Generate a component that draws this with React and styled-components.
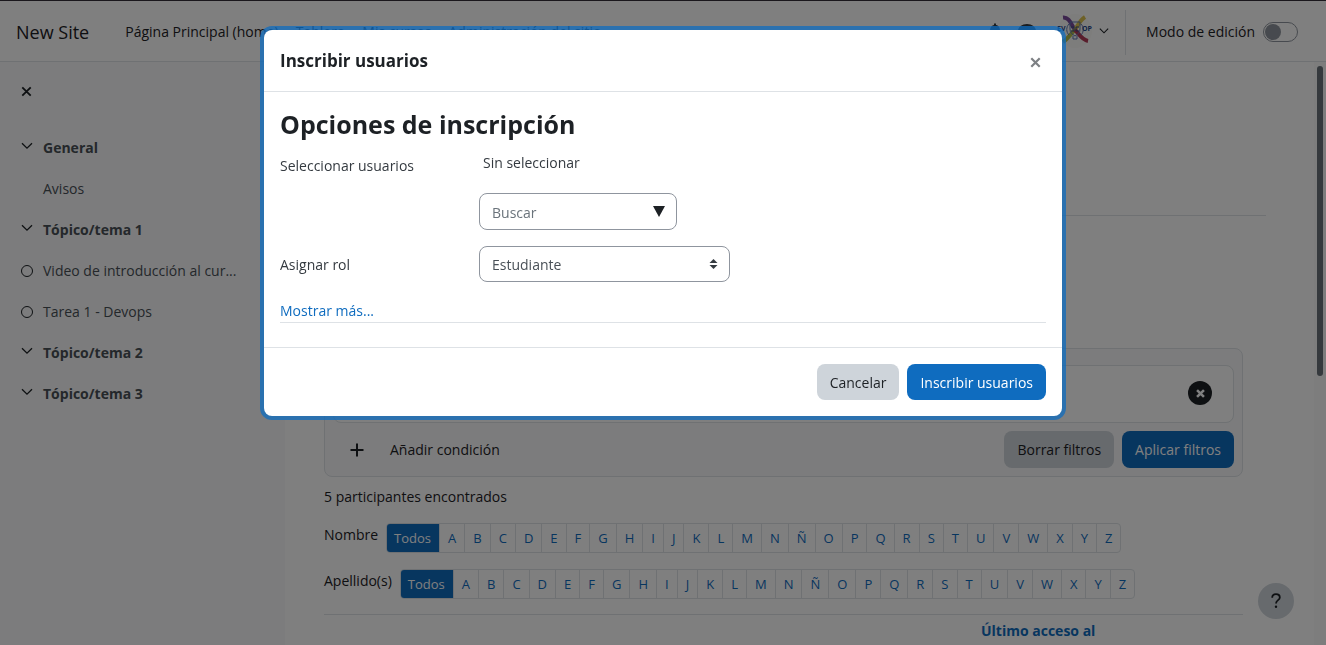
import React from "react";
import styled, { createGlobalStyle, css } from "styled-components";

const GlobalStyle = createGlobalStyle`
  *, *::before, *::after { box-sizing: border-box; }
  html, body { margin: 0; background: #fff; }
  body {
    font-family: "Open Sans", "Noto Sans", sans-serif;
    font-size: 14px;
    line-height: 22px;
    color: #1d2125;
    overflow: hidden;
  }
  button, input, select { font: inherit; color: inherit; margin: 0; }
  h1, h2, p, ul { margin: 0; padding: 0; }
  ul { list-style: none; }
  a { color: inherit; text-decoration: none; }
`;

const Page = styled.div`
  display: flex;
  flex-direction: column;
  height: 100vh;
  border-top: 1px solid #1a171c;
`;

const TopBar = styled.header`
  flex: none;
  display: flex;
  align-items: center;
  height: 61px;
  padding: 2px 28px 0 16px;
  border-bottom: 1px solid #dee2e6;
`;

const Brand = styled.a`
  margin-right: 36px;
  font-size: 18px;
`;

const Nav = styled.nav`
  display: flex;
  flex: 1;
  gap: 17px;
  white-space: nowrap;
`;

const IconButton = styled.button`
  display: inline-flex;
  align-items: center;
  justify-content: center;
  width: 32px;
  height: 32px;
  padding: 0;
  border: 0;
  background: none;
`;

const UserButton = styled(IconButton)`
  width: 52px;
  height: 36px;
  margin: 0 16px 0 14px;
  padding-bottom: 2px;
  gap: 6px;
`;

const EditMode = styled.label`
  display: flex;
  align-items: center;
  gap: 8px;
  height: 45px;
  padding-left: 20px;
  border-left: 1px solid #dee2e6;
`;

const Switch = styled.input`
  appearance: none;
  display: flex;
  align-items: center;
  width: 35px;
  height: 20px;
  margin: 0;
  padding: 0 1px;
  border: 1px solid #8f959e;
  border-radius: 10px;
  background: #fff;
  &::before {
    content: "";
    width: 16px;
    height: 16px;
    border-radius: 8px;
    background: #8f959e;
  }
`;

const Columns = styled.div`
  flex: 1;
  display: flex;
  min-height: 0;
`;

const Drawer = styled.aside`
  flex: none;
  width: 285px;
  padding: 13px 10px 0;
  background: #f8f9fa;
  color: #495057;
`;

const CourseIndex = styled.ul`
  margin-top: 20px;
`;

const IndexItem = styled.li`
  display: flex;
  align-items: center;
  height: 41px;
  font-weight: ${(p) => (p.$section ? 700 : 400)};
`;

const IndexMark = styled.span`
  flex: none;
  display: flex;
  justify-content: center;
  width: 33px;
  padding-bottom: ${(p) => (p.$section ? 3 : 0)}px;
`;

const Ring = styled.span`
  width: 12px;
  height: 12px;
  border: 1px solid #1d2125;
  border-radius: 50%;
`;

const Main = styled.main`
  flex: 1;
  min-width: 0;
  overflow: hidden;
  padding: 0 48px 0 16px;
`;

const CourseHeader = styled.div`
  height: 154px;
  border-bottom: 1px solid #dee2e6;
`;

const Participants = styled.section`
  padding: 132px 23px 0;
`;

const FilterCard = styled.div`
  display: flex;
  flex-direction: column;
  gap: 8px;
  padding: 16px 8px 8px;
  border: 1px solid #dee2e6;
  border-radius: 8px;
  background: #f8f9fa;
`;

const FilterRow = styled.div`
  display: flex;
  align-items: center;
  justify-content: flex-end;
  height: 58px;
  padding: 0 21px 2px;
  border: 1px solid #dee2e6;
  border-radius: 8px;
  background: #fff;
`;

const RemoveFilter = styled.button`
  display: flex;
  align-items: center;
  justify-content: center;
  width: 24px;
  height: 24px;
  padding: 0;
  border: 0;
  border-radius: 50%;
  background: #1d2125;
  color: #fff;
`;

const FilterActions = styled.div`
  display: flex;
  align-items: center;
  gap: 8px;
`;

const AddCondition = styled.button`
  display: flex;
  align-items: center;
  gap: 26px;
  margin-right: auto;
  padding: 0 17px;
  border: 0;
  background: none;
`;

const Button = styled.button`
  height: ${(p) => (p.$tall ? 37 : 36)}px;
  padding: ${(p) => (p.$tall ? 0 : 2)}px 12px 0;
  border: 1px solid transparent;
  border-radius: 8px;
  white-space: nowrap;
  ${(p) =>
    p.$primary
      ? css`background: #0f6cbf; color: #fff;`
      : css`background: #ced4da; color: #1d2125;`}
`;

const Count = styled.p`
  margin-top: 10px;
  line-height: 20px;
`;

const InitialsBar = styled.div`
  display: flex;
  align-items: flex-start;
  gap: 8px;
  margin-top: 16px;
`;

const InitialsLabel = styled.span`
  line-height: 24px;
`;

const InitialsList = styled.ul`
  display: flex;
  border: 1px solid #dee2e6;
  border-radius: 4px;
  overflow: hidden;
  font-size: 13px;
  line-height: 28px;
  color: #0f6cbf;
`;

const Initial = styled.li`
  padding: 0 8px;
  & + & { border-left: 1px solid #dee2e6; }
  ${(p) =>
    p.$active &&
    css`
      margin: -1px 0 -1px -1px;
      line-height: 30px;
      background: #0f6cbf;
      color: #fff;
    `}
`;

const UsersTable = styled.table`
  width: 100%;
  margin-top: 15px;
  border-collapse: collapse;
  border-top: 1px solid #dee2e6;
  table-layout: fixed;
  th { padding: 5px 0; text-align: left; color: #0f6cbf; }
  th:first-child { width: 657px; }
`;

const ScrollTrack = styled.div`
  flex: none;
  display: flex;
  justify-content: center;
  width: 12px;
  padding-top: 4px;
  background: #fafafa;
`;

const ScrollThumb = styled.div`
  width: 6px;
  height: 310px;
  border-radius: 3px;
  background: #6a737b;
`;

const HelpButton = styled.button`
  position: fixed;
  right: 32px;
  bottom: 26px;
  display: flex;
  align-items: center;
  justify-content: center;
  width: 36px;
  height: 36px;
  padding: 0;
  border: 0;
  border-radius: 50%;
  background: #ced4da;
`;

const Backdrop = styled.div`
  position: fixed;
  inset: 1px 0 0;
  display: flex;
  align-items: flex-start;
  justify-content: center;
  padding: 29px 16px;
  background: rgba(0, 0, 0, 0.5);
`;

const Dialog = styled.div`
  width: 100%;
  max-width: 798px;
  border-radius: 8px;
  background: #fff;
  box-shadow: 0 0 0 4px rgba(15, 108, 191, 0.75);
`;

const DialogHeader = styled.div`
  display: flex;
  align-items: center;
  justify-content: space-between;
  height: 62px;
  padding: 0 11px 0 16px;
  border-bottom: 1px solid #dee2e6;
`;

const CloseButton = styled(IconButton)`
  padding-top: 4px;
`;

const DialogTitle = styled.h1`
  font-size: 17px;
  font-weight: 700;
`;

const DialogBody = styled.div`
  padding: 16px 16px 24px;
`;

const SectionTitle = styled.h2`
  margin-bottom: 2px;
  font-size: 25px;
  line-height: 32px;
  font-weight: 700;
`;

const Field = styled.div`
  display: grid;
  grid-template-columns: 199px 1fr;
  align-items: start;
  margin-bottom: 16px;
`;

const FieldLabel = styled.label`
  padding-top: ${(p) => (p.$low ? 13 : 8)}px;
  color: #343a40;
`;

const Selection = styled.p`
  padding: 10px 4px 19px;
  height: 51px;
  color: #343a40;
`;

const Control = styled.div`
  position: relative;
  width: ${(p) => p.$width}px;
  color: #1d2125;
`;

const controlLook = css`
  display: block;
  width: 100%;
  height: 36px;
  padding: 2px 12px 0;
  border: 1px solid #8f959e;
  border-radius: 8px;
  background: #fff;
  color: #495057;
`;

const SearchInput = styled.input`
  ${controlLook}
  height: 37px;
  &::placeholder { color: #6a737b; opacity: 1; }
`;

const RoleSelect = styled.select`
  appearance: none;
  ${controlLook}
`;

const ControlMark = styled.span`
  position: absolute;
  top: 0;
  bottom: 0;
  right: 12px;
  display: flex;
  align-items: center;
  pointer-events: none;
`;

const MoreRow = styled.div`
  padding-top: 2px;
  border-bottom: 1px solid #dee2e6;
  a { color: #0f6cbf; }
`;

const DialogFooter = styled.div`
  display: flex;
  justify-content: flex-end;
  gap: 8px;
  padding: 16px;
  border-top: 1px solid #dee2e6;
`;

const Chevron = ({ size = 12 }) => (
  <svg width={size} height={size} viewBox="0 0 12 12" fill="none" stroke="#1d2125" strokeWidth="1.3" aria-hidden="true">
    <path d="M1 3.2 6 8.2 11 3.2" />
  </svg>
);

const Cross = ({ size, color, weight = 2 }) => (
  <svg width={size} height={size} viewBox="0 0 12 12" fill="none" stroke={color} strokeWidth={weight} aria-hidden="true">
    <path d="M1.4 1.4 10.6 10.6M10.6 1.4 1.4 10.6" />
  </svg>
);

const Avatar = () => (
  <svg width="36" height="36" viewBox="0 0 36 36" aria-hidden="true">
    <circle cx="18" cy="18" r="17" fill="#fbfaf8" />
    <path d="M6 4.500C12 4 14 11 18 17" fill="none" stroke="#7a4a9c" strokeWidth="4" />
    <path d="M28 4C23 7 21 12 18 17" fill="none" stroke="#dcc350" strokeWidth="4" />
    <path d="M18 17C14 20 12 25 6 29" fill="none" stroke="#b5bf4c" strokeWidth="4" />
    <path d="M18 17C22 21 25 27 31 28" fill="none" stroke="#b23a58" strokeWidth="4" />
    <path d="M12 11C9 14 9 19 12 22M24 11C27 14 27 19 24 22" fill="none" stroke="#5f78b0" strokeWidth="1" />
    <path d="M13 9H23V16C23 20 21 21 18 23C15 21 13 20 13 16Z" fill="none" stroke="#5f78b0" strokeWidth="1" />
    <path d="M14 14H17V18H14M22 14H19V18H22" fill="none" stroke="#374c86" strokeWidth="1" />
    <path d="M16 23V26H20V23" fill="none" stroke="#5f78b0" strokeWidth="1" />
    <text x="0" y="18" fontSize="7" fontWeight="700" fill="#24488f">EV</text>
    <text x="25" y="18" fontSize="7" fontWeight="700" fill="#24488f">OP</text>
  </svg>
);

const courseIndex = [
  { text: "General", section: true },
  { text: "Avisos" },
  { text: "Tópico/tema 1", section: true },
  { text: "Video de introducción al cur...", ring: true },
  { text: "Tarea 1 - Devops", ring: true },
  { text: "Tópico/tema 2", section: true },
  { text: "Tópico/tema 3", section: true },
];

const letters = [..."ABCDEFGHIJKLMNÑOPQRSTUVWXYZ"];

const Initials = ({ label }) => (
  <InitialsBar>
    <InitialsLabel>{label}</InitialsLabel>
    <InitialsList>
      <Initial $active>Todos</Initial>
      {letters.map((l) => (
        <Initial key={l}><a href="#inicial">{l}</a></Initial>
      ))}
    </InitialsList>
  </InitialsBar>
);

export default function App() {
  return (
    <>
      <GlobalStyle />
      <Page>
        <TopBar>
          <Brand href="#inicio">New Site</Brand>
          <Nav>
            <a href="#home">Página Principal (home)</a>
            <a href="#tablero">Tablero</a>
            <a href="#cursos">Mis cursos</a>
            <a href="#admin">Administración del sitio</a>
          </Nav>
          <IconButton aria-label="Notificaciones">
            <svg width="16" height="18" viewBox="0 0 16 18" fill="#343a40" aria-hidden="true">
              <path d="M7 2V0.5H9V2C12 2.5 13 5 13 8C13 11 15 12 15 14H1C1 12 3 11 3 8C3 5 4 2.500 7 2ZM6 15H10A2 2 0 0 1 6 15Z" />
            </svg>
          </IconButton>
          <IconButton aria-label="Mensajes">
            <svg width="18" height="16" viewBox="0 0 18 16" fill="#343a40" aria-hidden="true">
              <path d="M9 0C14 0 18 3 18 7S14 14 9 14C7.500 14 6 13.700 5 13.200C3.500 14.500 2 15 0.500 15C1.500 14 2 12.500 2.200 11.500C0.800 10.300 0 8.700 0 7C0 3 4 0 9 0Z" />
            </svg>
          </IconButton>
          <UserButton aria-label="Menú de usuario">
            <Avatar />
            <Chevron size={10} />
          </UserButton>
          <EditMode>
            Modo de edición
            <Switch type="checkbox" role="switch" />
          </EditMode>
        </TopBar>
        <Columns>
          <Drawer>
            <IconButton aria-label="Cerrar índice del curso">
              <Cross size={11} color="#1d2125" weight={2} />
            </IconButton>
            <CourseIndex>
              {courseIndex.map((item) => (
                <IndexItem key={item.text} $section={item.section}>
                  <IndexMark $section={item.section}>
                    {item.section && <Chevron />}
                    {item.ring && <Ring />}
                  </IndexMark>
                  <a href="#tema">{item.text}</a>
                </IndexItem>
              ))}
            </CourseIndex>
          </Drawer>
          <Main>
            <CourseHeader />
            <Participants>
              <FilterCard>
                <FilterRow>
                  <RemoveFilter aria-label="Quitar filtro">
                    <Cross size={9} color="#fff" weight={3.4} />
                  </RemoveFilter>
                </FilterRow>
                <FilterActions>
                  <AddCondition>
                    <svg width="14" height="14" viewBox="0 0 14 14" stroke="#1d2125" strokeWidth="2" aria-hidden="true">
                      <path d="M7 0.500V13.500M0.500 7H13.500" />
                    </svg>
                    Añadir condición
                  </AddCondition>
                  <Button $tall>Borrar filtros</Button>
                  <Button $tall $primary>Aplicar filtros</Button>
                </FilterActions>
              </FilterCard>
              <Count>5 participantes encontrados</Count>
              <Initials label="Nombre" />
              <Initials label="Apellido(s)" />
              <UsersTable>
                <thead>
                  <tr>
                    <th aria-label="Usuario" />
                    <th><a href="#acceso">Último acceso al</a></th>
                  </tr>
                </thead>
              </UsersTable>
            </Participants>
          </Main>
          <ScrollTrack>
            <ScrollThumb />
          </ScrollTrack>
        </Columns>
      </Page>
      <HelpButton aria-label="Ayuda">
        <svg width="10" height="16" viewBox="0 0 10 16" fill="none" stroke="#1d2125" strokeWidth="1.8" aria-hidden="true">
          <path d="M1.200 4.800C1.200 2.500 2.800 1.200 5 1.200C7.200 1.200 8.800 2.500 8.800 4.500C8.800 7.200 5 7.200 5 10.500" />
          <circle cx="5" cy="13.800" r="1.200" fill="#1d2125" stroke="none" />
        </svg>
      </HelpButton>
      <Backdrop>
        <Dialog role="dialog" aria-modal="true" aria-labelledby="dialog-title">
          <DialogHeader>
            <DialogTitle id="dialog-title">Inscribir usuarios</DialogTitle>
            <CloseButton aria-label="Cerrar">
              <Cross size={11} color="#7d8084" weight={2.4} />
            </CloseButton>
          </DialogHeader>
          <DialogBody>
            <SectionTitle>Opciones de inscripción</SectionTitle>
            <Field>
              <FieldLabel $low htmlFor="user-search">Seleccionar usuarios</FieldLabel>
              <div>
                <Selection>Sin seleccionar</Selection>
                <Control $width={198}>
                  <SearchInput id="user-search" type="text" placeholder="Buscar" />
                  <ControlMark>
                    <svg width="12" height="11" viewBox="0 0 12 11" fill="#1d2125" aria-hidden="true">
                      <path d="M0 0H12L6 11Z" />
                    </svg>
                  </ControlMark>
                </Control>
              </div>
            </Field>
            <Field>
              <FieldLabel htmlFor="role">Asignar rol</FieldLabel>
              <Control $width={251}>
                <RoleSelect id="role" defaultValue="Estudiante">
                  <option>Estudiante</option>
                </RoleSelect>
                <ControlMark>
                  <svg width="9" height="10" viewBox="0 0 9 10" fill="#343a40" aria-hidden="true">
                    <path d="M0.500 4 4.500 0 8.500 4ZM0.500 6 4.500 10 8.500 6Z" />
                  </svg>
                </ControlMark>
              </Control>
            </Field>
            <MoreRow>
              <a href="#mas">Mostrar más...</a>
            </MoreRow>
          </DialogBody>
          <DialogFooter>
            <Button>Cancelar</Button>
            <Button $primary>Inscribir usuarios</Button>
          </DialogFooter>
        </Dialog>
      </Backdrop>
    </>
  );
}
